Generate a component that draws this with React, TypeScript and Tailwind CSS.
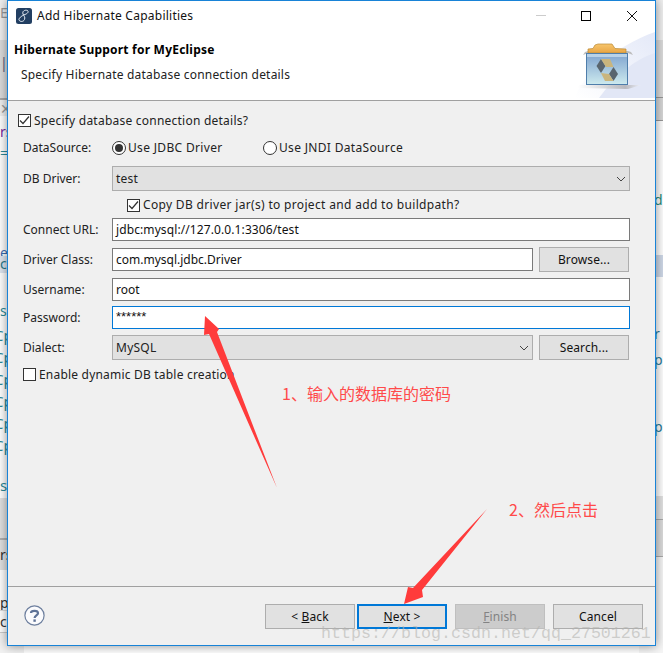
import React from "react";

const FONT = "font-['Noto_Sans','Liberation_Sans',sans-serif]";
const CJK = "font-['Noto_Sans_CJK_SC',sans-serif]";

function Check({ checked }: { checked: boolean }) {
  return (
    <span className="w-[13px] h-[13px] border border-[#333333] bg-white flex items-center justify-center shrink-0">
      {checked && (
        <svg width="11" height="11" viewBox="0 0 11 11">
          <path d="M1 5.5 L4 8.5 L10 1.5" fill="none" stroke="#333333" strokeWidth="1.2" />
        </svg>
      )}
    </span>
  );
}

function Radio({ on }: { on: boolean }) {
  return (
    <span className="w-[14px] h-[14px] rounded-full border border-[#333333] bg-white flex items-center justify-center shrink-0">
      {on && <span className="w-[8px] h-[8px] rounded-full bg-[#333333]" />}
    </span>
  );
}

function Chevron() {
  return (
    <svg width="10" height="6" viewBox="0 0 10 6" className="shrink-0">
      <path d="M1 1 L5 5 L9 1" fill="none" stroke="#444444" strokeWidth="1" />
    </svg>
  );
}

function Select({ value, className }: { value: string; className: string }) {
  return (
    <div className={`h-[25px] bg-[#e1e1e1] border border-[#adadad] flex items-center justify-between pl-[3px] pr-[3px] ${className}`}>
      <span className="text-[#222222] tracking-[0.25px]">{value}</span>
      <Chevron />
    </div>
  );
}

function Input({ value, className = "", focused = false }: { value: string; className?: string; focused?: boolean }) {
  return (
    <div
      className={`h-[23px] bg-white border flex items-center pl-[3px] text-[#111111] ${
        focused ? "border-[#0078d7]" : "border-[#7a7a7a]"
      } ${className}`}
    >
      {value}
    </div>
  );
}

const BTN_VARIANT = {
  normal: "bg-[#e1e1e1] border border-[#adadad] text-[#111111]",
  primary: "bg-[#e1e1e1] border-2 border-[#0078d7] text-[#111111]",
  disabled: "bg-[#cccccc] border border-[#bfbfbf] text-[#838383]",
};

function Btn({
  children,
  className = "",
  variant = "normal",
}: {
  children: React.ReactNode;
  className?: string;
  variant?: keyof typeof BTN_VARIANT;
}) {
  return (
    <div className={`w-[90px] h-[25px] flex items-center justify-center tracking-[0.1px] shrink-0 ${BTN_VARIANT[variant]} ${className}`}>
      {children}
    </div>
  );
}

function Label({ children }: { children: React.ReactNode }) {
  return <span className="w-[89px] shrink-0 text-[#222222]">{children}</span>;
}

function Band({ h, bg, children, className = "" }: { h: string; bg: string; children?: React.ReactNode; className?: string }) {
  return (
    <div className={`${h} ${bg} ${className} overflow-hidden whitespace-nowrap text-[14px] leading-none`}>{children}</div>
  );
}

const leftCode = ["mt-[0px]", "mt-[7px]", "mt-[7px]", "mt-[7px]", "mt-[7px]", "mt-[7px]"];

function LeftStrip() {
  return (
    <div className="flex flex-col w-[24px] h-full">
      <Band h="h-[40px]" bg="bg-[#f0f0f0]" className="pt-[6px] text-[#9a9a9a]">En</Band>
      <Band h="h-[58px]" bg="bg-[#dcdcdc]" className="pt-[16px] text-[#556080]">|</Band>
      <Band h="h-[2px]" bg="bg-[#a8a8a8]" />
      <Band h="h-[16px]" bg="bg-[#f0f0f0]" className="text-[#999999] text-[12px] pt-[2px]">✕</Band>
      <Band h="h-[130px]" bg="bg-[#ffffff]" className="pt-[9px] text-[#7a1fa0]">
        rs
        <div className="text-[#2a8a9a] mt-[7px]">=</div>
      </Band>
      <Band h="h-[10px]" bg="bg-[#ffffff]" className="text-[#3a6ab0]">e</Band>
      <Band h="h-[17px]" bg="bg-[#dfe6f0]" className="pt-[1px] text-[#2a7a8a]">c</Band>
      <Band h="h-[55px]" bg="bg-[#ffffff]" className="pt-[31px] text-[#2a8a9a]">s :</Band>
      <Band h="h-[170px]" bg="bg-[#ffffff]" className="text-[#2a8a9a] text-[15px]">
        {leftCode.map((m, i) => (
          <div key={i} className={`${m} -ml-[6px]`}>
            Cp
          </div>
        ))}
        <div className="mt-[25px]">s</div>
      </Band>
      <Band h="h-[40px]" bg="bg-[#e2e2e2]" />
      <Band h="h-[2px]" bg="bg-[#b0b0b0]" />
      <Band h="h-[30px]" bg="bg-[#e2e2e2]" className="pt-[8px] text-[#333333]">rs</Band>
      <Band h="h-[40px]" bg="bg-[#ffffff]" className="pt-[26px] text-[#333333]">py</Band>
      <Band h="h-[22px]" bg="bg-[#ffffff]" className="border-t border-[#dddddd] pt-[4px] text-[#333333]">c</Band>
      <Band h="h-[21px]" bg="bg-[#f2f2f2]" className="border-t border-[#cccccc]" />
    </div>
  );
}

function RightStrip() {
  return (
    <div className="flex flex-col w-[24px] h-full">
      <Band h="h-[40px]" bg="bg-[#f0f0f0]" />
      <Band h="h-[57px]" bg="bg-[#dcdcdc]" />
      <Band h="h-[24px]" bg="bg-[#d8d8d8]" className="border-y border-[#999999]" />
      <Band h="h-[70px]" bg="bg-[#ffffff]" />
      <Band h="h-[64px]" bg="bg-[#ffffff]" className="pl-[15px] pt-[2px] text-[#2a8a7a]">d</Band>
      <Band h="h-[22px]" bg="bg-[#cfd9e8]" />
      <Band h="h-[50px]" bg="bg-[#ffffff]" />
      <Band h="h-[26px]" bg="bg-[#ffffff]" className="pl-[15px] text-[#2a7a9a]">r</Band>
      <Band h="h-[67px]" bg="bg-[#ffffff]" className="pl-[15px] text-[#2a7a9a]">p</Band>
      <Band h="h-[76px]" bg="bg-[#ffffff]" className="pl-[15px] text-[#2a7a9a]">p</Band>
      <Band h="h-[23px]" bg="bg-[#e2e2e2]" />
      <Band h="h-[38px]" bg="bg-[#dcdcdc]" className="border-y border-[#aaaaaa]" />
      <Band h="h-[96px]" bg="bg-[#f6f6f6]" />
    </div>
  );
}

function AppLogo() {
  return (
    <svg width="16" height="16" viewBox="0 0 16 16" className="shrink-0">
      <rect x="0" y="0" width="16" height="16" rx="2.5" fill="#223f62" />
      <path d="M11.5 2.5 C8.5 1.5 6 3.5 7 6 C8 8.5 9.5 9 8.5 11.5 C7.5 14 4 14 3 12 C2.5 10.5 5 8 9 6.5 C11.5 5.5 13 4 11.5 2.5 Z" fill="none" stroke="#e8eef5" strokeWidth="1" />
    </svg>
  );
}

function BannerArt() {
  return (
    <svg width="80" height="67" viewBox="0 0 80 67" className="block">
      <defs>
        <linearGradient id="wash" x1="0" y1="1" x2="1" y2="0">
          <stop offset="0" stopColor="#ffffff" />
          <stop offset="1" stopColor="#e4e9f8" />
        </linearGradient>
        <linearGradient id="body" x1="0" y1="0" x2="0" y2="1">
          <stop offset="0" stopColor="#7fa3cf" />
          <stop offset="1" stopColor="#cdeaee" />
        </linearGradient>
        <linearGradient id="tab" x1="0" y1="0" x2="0" y2="1">
          <stop offset="0" stopColor="#f7c56c" />
          <stop offset="1" stopColor="#e8a544" />
        </linearGradient>
        <linearGradient id="shade" x1="0" y1="0" x2="1" y2="0">
          <stop offset="0" stopColor="#ffffff" />
          <stop offset="0.75" stopColor="#b0b0b4" />
          <stop offset="1" stopColor="#f0f2fa" />
        </linearGradient>
      </defs>
      <path d="M0 67 C6 45 40 15 80 1 L80 67 Z" fill="url(#wash)" />
      <path d="M24 67 C40 45 60 28 80 22 L80 67 Z" fill="#e2e7f6" />
      <path d="M3 54 L66 54 L53 58 L3 57 Z" fill="url(#shade)" opacity="0.85" />
      <path d="M8 24 L10 21 L13 20 L53 20 L56 21 L58 24 L53 22 L13 22 Z" fill="#bdbdbd" />
      <path d="M13 22 L13 18 L18 17.5 L20 14 L23 13 L37 13 L40 17.5 L51 18 L51 22 Z" fill="url(#tab)" stroke="#b98a36" strokeWidth="0.7" />
      <rect x="11.5" y="22.5" width="41" height="31" fill="url(#body)" stroke="#4f7eab" />
      <rect x="12" y="23" width="40" height="3" fill="#b9d2e8" />
      <polygon points="26,28 30.5,35 26,42 21.5,35" fill="#59656f" />
      <polygon points="38.5,36 43,43 38.5,50 34,43" fill="#59656f" />
      <polygon points="26,28 35,28 38.5,36 31,36 " fill="#c9b57e" />
      <polygon points="26,42 34,43 38.5,50 30,50" fill="#c9b57e" />
    </svg>
  );
}

function HelpIcon() {
  return (
    <svg width="21" height="21" viewBox="0 0 21 21" className="shrink-0">
      <circle cx="10.5" cy="10.5" r="9.6" fill="#fbfbfd" stroke="#6d7f9e" strokeWidth="1.2" />
      <path d="M7 8 C7 5.2 14 5 14 8.2 C14 10.3 10.6 10.5 10.6 13" fill="none" stroke="#5f7397" strokeWidth="2.2" />
      <rect x="9.4" y="14.4" width="2.4" height="2.4" fill="#5f7397" />
    </svg>
  );
}

function WindowControls() {
  return (
    <div className="flex items-center h-full">
      <div className="w-[10px] h-[1px] bg-[#cccccc] mr-[35px]" />
      <div className="w-[10px] h-[10px] border border-black mr-[36px]" />
      <svg width="10" height="10" viewBox="0 0 10 10" className="mr-[18px]">
        <path d="M0 0 L10 10 M10 0 L0 10" stroke="#111111" strokeWidth="1" />
      </svg>
    </div>
  );
}

export default function App() {
  return (
    <div className={`relative w-[663px] h-[653px] overflow-hidden flex justify-between bg-white text-[12px] leading-none ${FONT}`}>
      <LeftStrip />
      <RightStrip />

      <div className="absolute left-[7px] top-0 w-[649px] h-[646px] border border-[#1883d7] bg-[#f0f0f0] flex flex-col shadow-[0_0_10px_rgba(0,0,0,0.45)]">
        <header className="relative h-[99px] bg-white shrink-0">
          <div className="flex items-center justify-between h-[29px] pl-[8px]">
            <div className="flex items-center gap-[5px]">
              <AppLogo />
              <span className="text-[#111111] tracking-[0.02em]">Add Hibernate Capabilities</span>
            </div>
            <WindowControls />
          </div>
          <div className="pl-[6px] mt-[14px] font-bold text-[#000000] tracking-[0.22px]">Hibernate Support for MyEclipse</div>
          <div className="pl-[13px] mt-[13px] text-[#222222] tracking-[0.2px]">Specify Hibernate database connection details</div>
          <div className="absolute right-0 bottom-[2px]">
            <BannerArt />
          </div>
        </header>
        <div className="h-[1px] bg-[#a0a0a0] shrink-0" />

        <main className="flex-1 flex flex-col pl-[10px] pr-[25px] pt-[13px]">
          <label className="flex items-center gap-[3px] h-[13px] text-[#222222] tracking-[0.23px]">
            <Check checked />
            Specify database connection details?
          </label>

          <div className="pl-[5px] flex flex-col">
            <div className="flex items-center h-[14px] mt-[14px]">
              <Label>DataSource:</Label>
              <span className="flex items-center gap-[2px] w-[151px] text-[#222222] tracking-[0.33px]">
                <Radio on />
                Use JDBC Driver
              </span>
              <span className="flex items-center gap-[2px] text-[#222222] tracking-[0.33px]">
                <Radio on={false} />
                Use JNDI DataSource
              </span>
            </div>

            <div className="flex items-center mt-[11px]">
              <Label>DB Driver:</Label>
              <Select value="test" className="flex-1" />
            </div>

            <label className="flex items-center gap-[3px] h-[14px] mt-[7px] pl-[104px] text-[#222222] tracking-[0.33px]">
              <Check checked />
              Copy DB driver jar(s) to project and add to buildpath?
            </label>

            <div className="flex items-center mt-[6px]">
              <Label>Connect URL:</Label>
              <Input value="jdbc:mysql://127.0.0.1:3306/test" className="flex-1 tracking-[0.1px]" />
            </div>

            <div className="flex items-center mt-[6px] h-[25px]">
              <Label>Driver Class:</Label>
              <Input value="com.mysql.jdbc.Driver" className="flex-1" />
              <Btn className="ml-[6px] mr-[1px]">Browse...</Btn>
            </div>

            <div className="flex items-center mt-[6px]">
              <Label>Username:</Label>
              <Input value="root" className="flex-1" />
            </div>

            <div className="flex items-center mt-[5px]">
              <Label>Password:</Label>
              <Input value="******" className="flex-1 pb-[3px] text-[13px] font-['Liberation_Sans',sans-serif]" focused />
            </div>

            <div className="flex items-center mt-[6px]">
              <Label>Dialect:</Label>
              <Select value="MySQL" className="flex-1" />
              <Btn className="ml-[6px] mr-[1px]">Search...</Btn>
            </div>

            <label className="flex items-center gap-[3px] h-[13px] mt-[8px] text-[#222222] tracking-[0.2px]">
              <Check checked={false} />
              Enable dynamic DB table creation
            </label>
          </div>
        </main>

        <div className="h-[1px] bg-[#a0a0a0] shrink-0" />
        <footer className="h-[58px] shrink-0 flex items-start justify-between pl-[16px] pr-[12px] pt-[17px]">
          <div className="pt-[1px]">
            <HelpIcon />
          </div>
          <div className="flex">
            <Btn className="mr-[2px]">
              <span>&lt; <span className="underline">B</span>ack</span>
            </Btn>
            <Btn variant="primary" className="mr-[8px]">
              <span><span className="underline">N</span>ext &gt;</span>
            </Btn>
            <Btn variant="disabled" className="mr-[8px]">
              <span><span className="underline">F</span>inish</span>
            </Btn>
            <Btn>Cancel</Btn>
          </div>
        </footer>
      </div>

      <svg width="663" height="653" viewBox="0 0 663 653" className="absolute inset-0 pointer-events-none">
        <polygon points="205,316 219,329 217,332 277,488 209,334 204,335" fill="#ff3b3b" />
        <polygon points="487,509 422,590 423,597 404,604 408,587 413,588" fill="#ff3b3b" />
      </svg>

      <span className={`absolute left-[282px] top-[385px] text-[16px] leading-[16px] text-[#ff4a4a] whitespace-nowrap ${CJK}`}>1、输入的数据库的密码</span>
      <span className={`absolute left-[509px] top-[501px] text-[16px] leading-[16px] text-[#ff4a4a] whitespace-nowrap ${CJK}`}>2、然后点击</span>
      <span className="absolute left-[321px] top-[625px] text-[16.67px] leading-[17px] text-[#b4b4b0]/60 whitespace-nowrap font-['Liberation_Mono',monospace]">https://blog.csdn.net/qq_27501261</span>
    </div>
  );
}
